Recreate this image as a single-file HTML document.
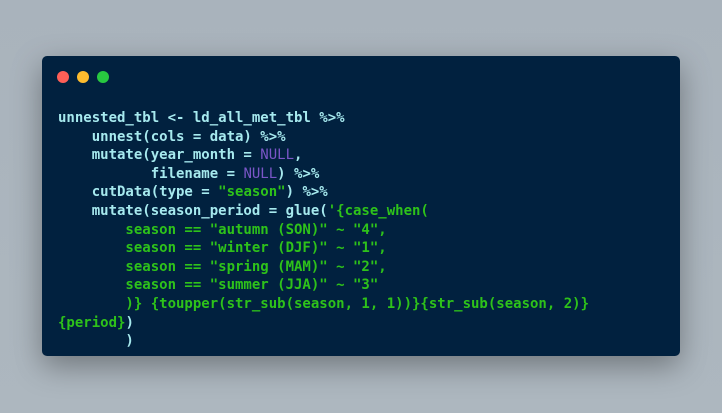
<!DOCTYPE html>
<html><head><style>
html,body{margin:0;padding:0;}
body{width:722px;height:413px;background:linear-gradient(180deg,#a9b3bc,#adb7bf);position:relative;overflow:hidden;}
.win{position:absolute;left:42px;top:56px;width:638px;height:300px;background:#01213f;border-radius:5px;box-shadow:0 10px 30px rgba(0,0,0,0.35);}
.dot{position:absolute;top:15px;width:12px;height:12px;border-radius:50%;}
pre{position:absolute;left:16px;top:53px;margin:0;font-family:"DejaVu Sans Mono","Liberation Mono",monospace;font-size:14px;line-height:18.6px;color:#a6e9ee;font-weight:bold;}
.s{color:#2ec21a;}
.n{color:#7a56c8;font-weight:normal;}
</style></head><body>
<div class="win">
<div class="dot" style="left:15px;background:#fe5f57"></div>
<div class="dot" style="left:35px;background:#febc2e"></div>
<div class="dot" style="left:55px;background:#28c840"></div>
<pre>unnested_tbl &lt;- ld_all_met_tbl %&gt;%
    unnest(cols = data) %&gt;%
    mutate(year_month = <span class="n">NULL</span>,
           filename = <span class="n">NULL</span>) %&gt;%
    cutData(type = <span class="s">"season"</span>) %&gt;%
    mutate(season_period = glue(<span class="s">'{case_when(
        season == "autumn (SON)" ~ "4",
        season == "winter (DJF)" ~ "1",
        season == "spring (MAM)" ~ "2",
        season == "summer (JJA)" ~ "3"
        )} {toupper(str_sub(season, 1, 1))}{str_sub(season, 2)}
{period}</span>)
        )</pre>
</div>
</body></html>
